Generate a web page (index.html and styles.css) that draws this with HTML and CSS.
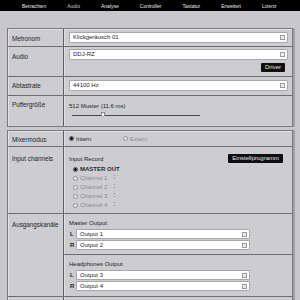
FILE: index.html
```html
<!DOCTYPE html>
<html lang="de">
<head>
    <meta charset="UTF-8">
    <title>Einstellungen</title>
    <link rel="stylesheet" href="styles.css">
</head>
<body>
    <nav class="topbar">
        <span class="tab">Betrachten</span>
        <span class="tab active">Audio</span>
        <span class="tab">Analyse</span>
        <span class="tab">Controller</span>
        <span class="tab">Tastatur</span>
        <span class="tab">Erweitert</span>
        <span class="tab">Lizenz</span>
    </nav>
    <main class="content">
        <section class="panel">
            <div class="row row-metronom">
                <div class="label">Metronom</div>
                <div class="field">
                    <div class="select">Klickgeräusch 01<span class="arrow"></span></div>
                </div>
            </div>
            <div class="row row-audio">
                <div class="label">Audio</div>
                <div class="field">
                    <div class="select">DDJ-RZ<span class="arrow"></span></div>
                    <div class="btnline"><span class="button">Driver</span></div>
                </div>
            </div>
            <div class="row row-rate">
                <div class="label">Abtastrate</div>
                <div class="field">
                    <div class="select">44100 Hz<span class="arrow"></span></div>
                </div>
            </div>
            <div class="row row-buffer">
                <div class="label">Puffergröße</div>
                <div class="field">
                    <div class="value">512 Muster (11.6 ms)</div>
                    <div class="slider"><span class="track"></span><span class="thumb"></span></div>
                </div>
            </div>
        </section>

        <section class="panel">
            <div class="row row-mixer">
                <div class="label">Mixermodus</div>
                <div class="field radios-inline">
                    <span class="radio checked option"><i></i>Intern</span>
                    <span class="radio disabled option"><i></i>Extern</span>
                </div>
            </div>
            <div class="row row-input">
                <div class="label">Input channels</div>
                <div class="field">
                    <div class="subhead">
                        <span>Input Record</span>
                        <span class="button">Einstellprogramm</span>
                    </div>
                    <ul class="channel-list">
                        <li class="radio checked strong"><i></i>MASTER OUT<b class="meter"></b></li>
                        <li class="radio disabled"><i></i>Channel 1<b class="meter"></b></li>
                        <li class="radio disabled"><i></i>Channel 2<b class="meter"></b></li>
                        <li class="radio disabled"><i></i>Channel 3<b class="meter"></b></li>
                        <li class="radio disabled"><i></i>Channel 4<b class="meter"></b></li>
                    </ul>
                </div>
            </div>
            <div class="row row-output">
                <div class="label">Ausgangskanäle</div>
                <div class="field nopad">
                    <div class="group">
                        <div class="subhead">Master Output</div>
                        <div class="pair"><span class="side">L</span><div class="select small">Output 1<span class="arrow"></span></div></div>
                        <div class="pair"><span class="side">R</span><div class="select small">Output 2<span class="arrow"></span></div></div>
                    </div>
                    <div class="group">
                        <div class="subhead">Headphones Output</div>
                        <div class="pair"><span class="side">L</span><div class="select small">Output 3<span class="arrow"></span></div></div>
                        <div class="pair"><span class="side">R</span><div class="select small">Output 4<span class="arrow"></span></div></div>
                    </div>
                </div>
            </div>
            <div class="row row-more">
                <div class="label"></div>
                <div class="field"></div>
            </div>
        </section>
    </main>
</body>
</html>
```

FILE: styles.css
```css
* {
    margin: 0px;
    padding: 0px;
    box-sizing: border-box;
}
body, html {
    height: 100%;
    overflow: hidden;
}
body {
    background-color: #c8c8cc;
    font-family: "Liberation Sans", Arial, sans-serif;
    color: #1e1e1e;
}
.topbar {
    background-color: #000;
    height: 11px;
    display: flex;
    align-items: center;
    padding-left: 22px;
    gap: 21px;
}
.tab {
    color: #e8e8e8;
    font-size: 5px;
}
.tab.active {
    color: #c4c4c4;
}
.content {
    padding: 17px 7px 0px 7px;
}
.panel {
    background-color: #cdcdd1;
    border: 1px solid #7a7a7e;
    box-shadow: 2px 0px 0px #a0a0a4, inset 1px 1px 0px #e2e2e6;
    margin-bottom: 3px;
}
.row {
    display: grid;
    grid-template-columns: 56px 1fr;
    border-bottom: 1px solid #6e6e72;
}
.row:last-child {
    border-bottom: 0px;
}
.label {
    font-size: 6.3px;
    padding: 7px 0px 0px 4px;
    border-right: 1px solid #5e5e62;
    box-shadow: 1px 0px 0px #e0e0e4;
}
.field {
    padding: 2px 4px 2px 5px;
    font-size: 6px;
}
.field.nopad {
    padding: 0px;
}
.select {
    position: relative;
    height: 11px;
    background-color: #fff;
    border: 1px solid #a8a8ac;
    border-radius: 1px;
    font-size: 6px;
    line-height: 9px;
    padding-left: 3px;
}
.select.small {
    height: 10px;
    line-height: 8px;
    flex: 1;
}
.arrow {
    position: absolute;
    right: 2px;
    top: 2px;
    width: 5px;
    height: 5px;
    border: 1px solid #9a9a9e;
    background-color: #ededed;
}
.select.small .arrow {
    top: 1.5px;
}
.btnline {
    display: flex;
    justify-content: flex-end;
    padding: 3px 3px 2px 0px;
}
.button {
    background-color: #0f0f10;
    color: #e4e4e4;
    font-size: 6px;
    line-height: 9px;
    padding: 0px 4px;
    border-radius: 1px;
}
.row-metronom .label { padding-top: 6px; }
.row-metronom .field { padding-top: 3px; padding-bottom: 3px; }
.row-audio .label { padding-top: 6px; }
.row-rate .label { padding-top: 5px; }
.row-rate .field { padding-top: 3px; padding-bottom: 4px; }
.row-buffer { height: 30px; }
.row-buffer .label { padding-top: 5px; }
.value {
    padding-top: 5px;
    font-size: 6px;
}
.slider {
    position: relative;
    height: 10px;
    margin-left: 3px;
    width: 128px;
}
.track {
    position: absolute;
    left: 0px;
    right: 0px;
    top: 6px;
    height: 1px;
    background-color: #4a4a4e;
}
.thumb {
    position: absolute;
    left: 29px;
    top: 3px;
    width: 4px;
    height: 5px;
    background-color: #f4f4f4;
    border: 1px solid #8a8a8e;
    clip-path: polygon(0 0, 100% 0, 100% 55%, 50% 100%, 0 55%);
}
.row-mixer .label { padding-top: 5px; }
.row-mixer .field { height: 15px; }
.radios-inline {
    display: flex;
    align-items: center;
}
.radio.option {
    width: 54px;
}
.radio {
    display: flex;
    align-items: center;
    font-size: 6px;
    list-style: none;
}
.radio i {
    display: inline-block;
    width: 5px;
    height: 5px;
    border: 1px solid #4c4c50;
    border-radius: 50%;
    margin-right: 2px;
    background-color: #e8e8ec;
}
.radio.checked i {
    background: radial-gradient(circle, #111 0px, #111 1.2px, #e8e8ec 1.6px);
}
.radio.disabled {
    color: #8c8c90;
}
.radio.disabled i {
    border-color: #8c8c90;
}
.radio.strong {
    font-weight: bold;
    color: #2a2a2e;
}
.row-input { height: 67px; }
.row-input .label { padding-top: 8px; }
.row-input .field { padding-top: 7px; }
.subhead {
    display: flex;
    justify-content: space-between;
    align-items: center;
    font-size: 6px;
    padding-right: 5px;
}
.channel-list {
    padding: 3px 0px 0px 4px;
    display: flex;
    flex-direction: column;
    gap: 3px;
}
.channel-list .radio {
    position: relative;
    height: 6px;
}
.meter {
    position: absolute;
    left: 41px;
    top: 0px;
    width: 1px;
    height: 5px;
    background: repeating-linear-gradient(#8c8c90 0px, #8c8c90 1px, transparent 1px, transparent 3px);
}
.row-output { height: 83px; }
.row-output .label { padding-top: 7px; }
.group {
    padding: 6px 42px 4px 5px;
    border-bottom: 1px solid #6e6e72;
    display: flex;
    flex-direction: column;
    gap: 1px;
}
.group:last-child {
    border-bottom: 0px;
}
.group .subhead {
    margin-bottom: 2px;
}
.pair {
    display: flex;
    align-items: center;
}
.side {
    width: 7px;
    font-size: 6px;
    font-weight: bold;
    padding-left: 1px;
}
.row-more { height: 20px; }
```
